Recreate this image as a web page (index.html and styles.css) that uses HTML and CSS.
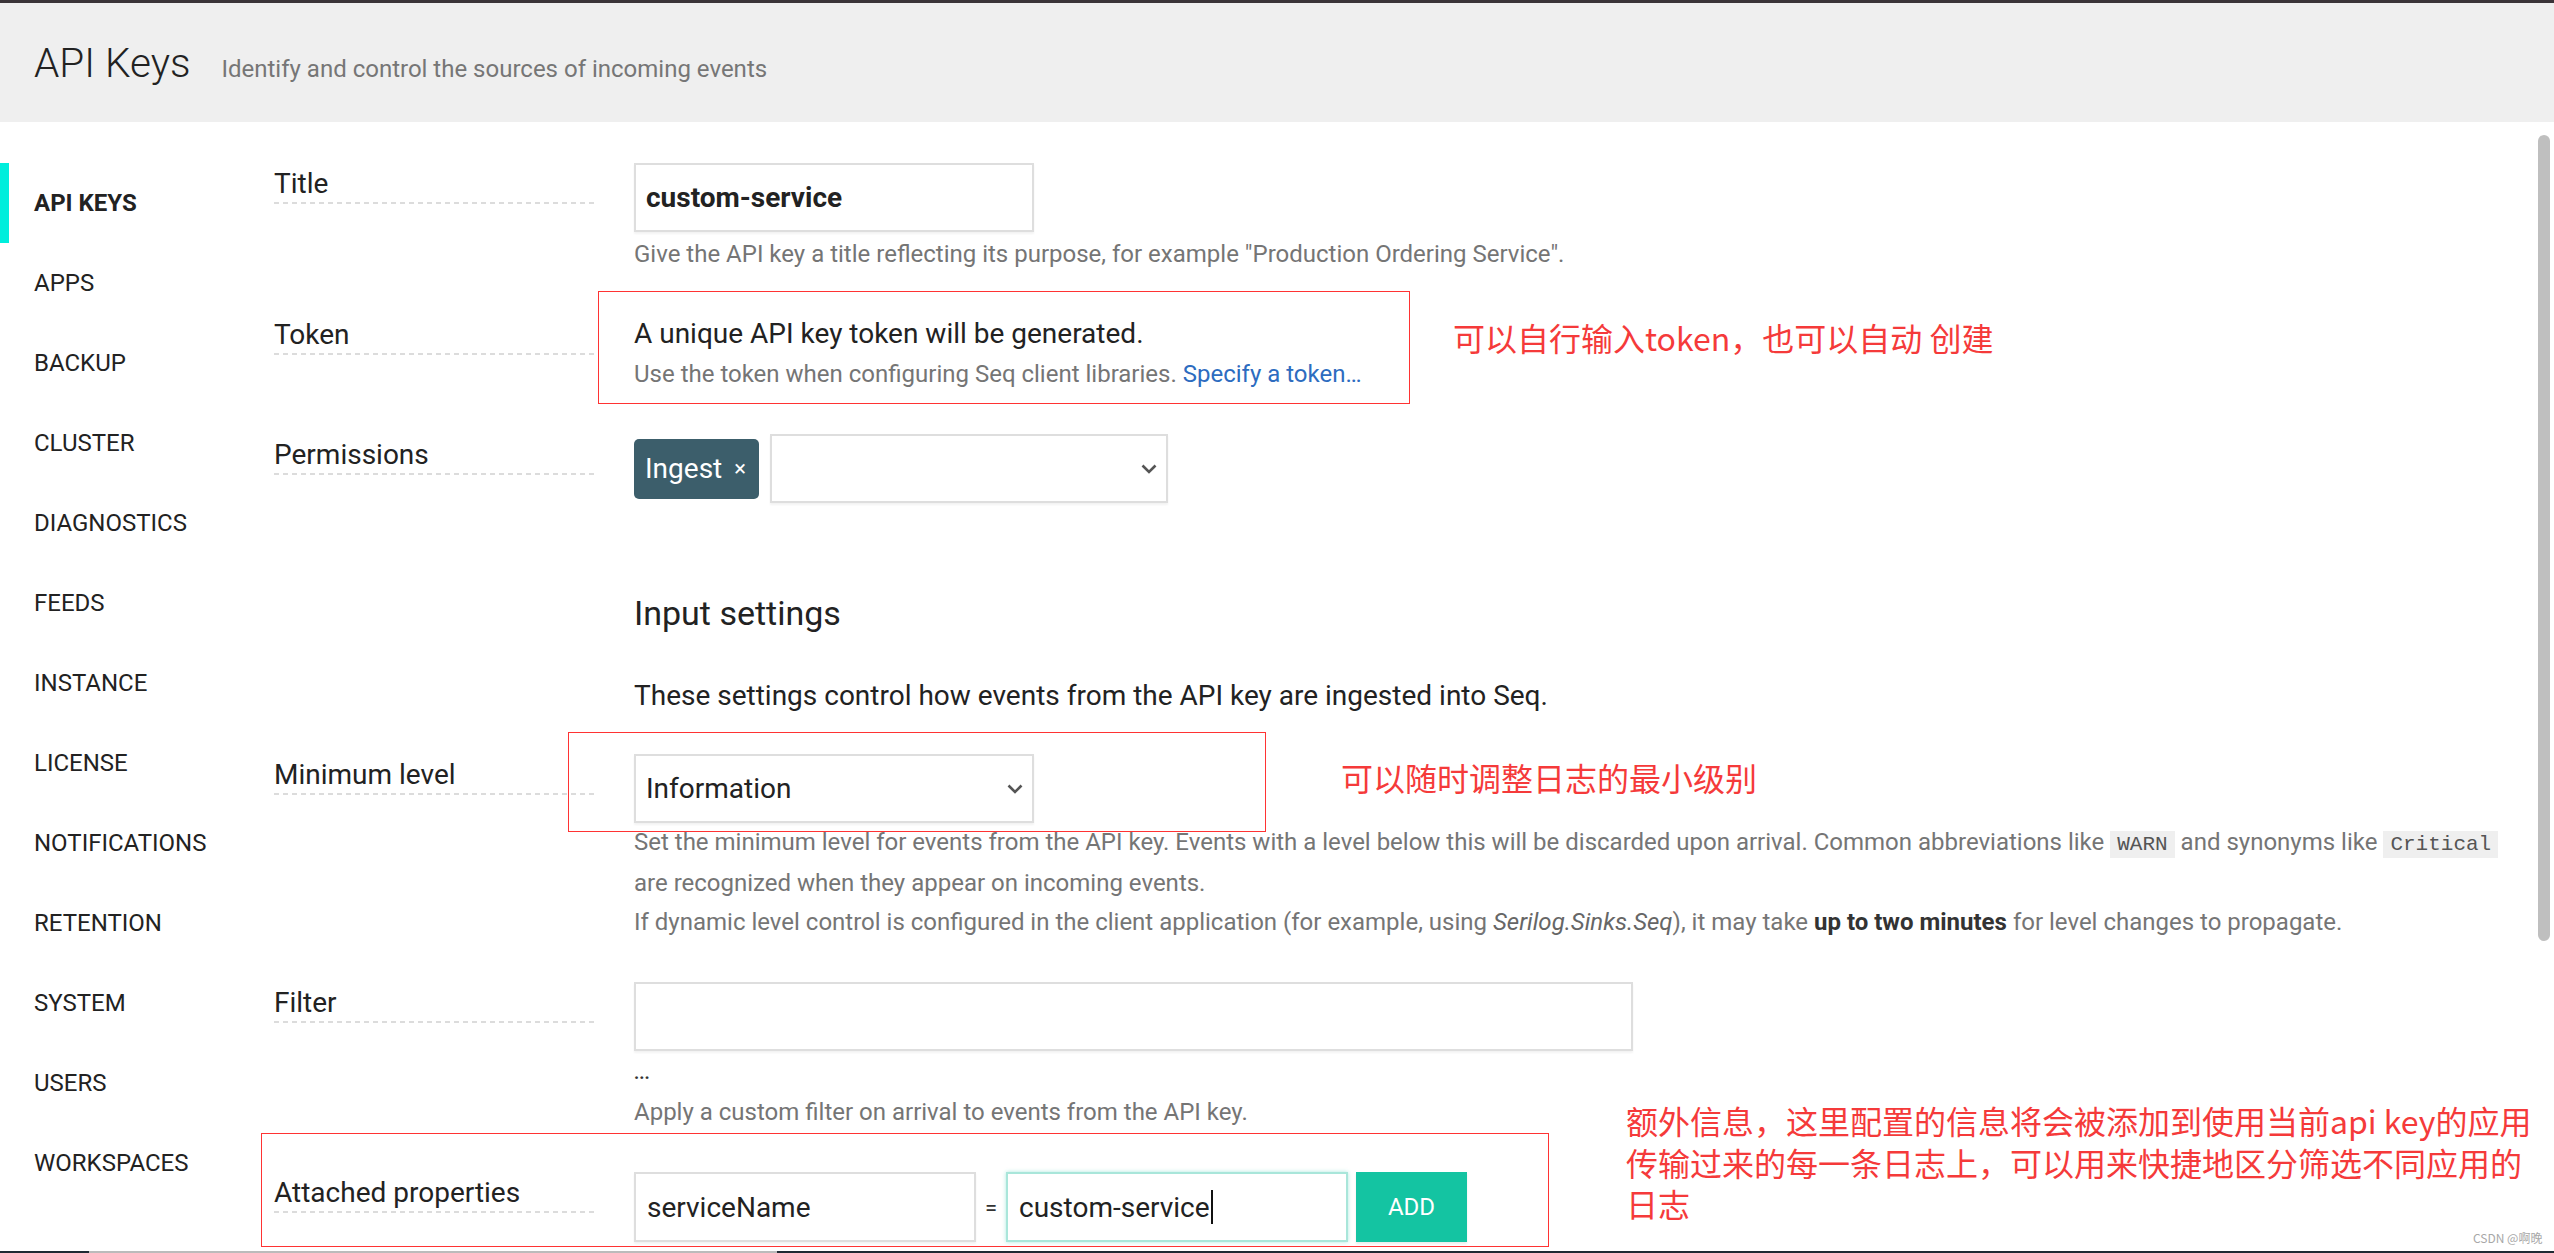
FILE: index.html
```html
<!DOCTYPE html>
<html lang="en">
<head>
<meta charset="utf-8">
<title>API Keys</title>
<link rel="stylesheet" href="styles.css">
</head>
<body>
<div class="topline"></div>
<header class="header">
  <h1>API Keys</h1>
  <span class="sub">Identify and control the sources of incoming events</span>
</header>
<div class="main">
  <nav class="sidebar">
    <div class="nav-item active">API KEYS</div>
    <div class="nav-item">APPS</div>
    <div class="nav-item">BACKUP</div>
    <div class="nav-item">CLUSTER</div>
    <div class="nav-item">DIAGNOSTICS</div>
    <div class="nav-item">FEEDS</div>
    <div class="nav-item">INSTANCE</div>
    <div class="nav-item">LICENSE</div>
    <div class="nav-item">NOTIFICATIONS</div>
    <div class="nav-item">RETENTION</div>
    <div class="nav-item">SYSTEM</div>
    <div class="nav-item">USERS</div>
    <div class="nav-item">WORKSPACES</div>
  </nav>
  <section class="content">
    <div class="row">
      <div class="label">Title</div>
      <div class="field">
        <div class="input title-input">custom-service</div>
        <p class="help help-title">Give the API key a title reflecting its purpose, for example "Production Ordering Service".</p>
      </div>
    </div>
    <div class="row">
      <div class="label">Token</div>
      <div class="field">
        <p class="token-main">A unique API key token will be generated.</p>
        <p class="help">Use the token when configuring Seq client libraries. <a class="link">Specify a token…</a></p>
      </div>
    </div>
    <div class="row">
      <div class="label">Permissions</div>
      <div class="field perm">
        <span class="chip">Ingest<span class="chip-x">×</span></span>
        <div class="select perm-select">
          <span></span>
          <svg class="chev" width="16" height="10" viewBox="0 0 16 10"><polyline points="1.5,1.5 8,8 14.5,1.5" fill="none" stroke="#555" stroke-width="2.6"/></svg>
        </div>
      </div>
    </div>
    <div class="row section">
      <div class="label-empty"></div>
      <div class="field">
        <h2>Input settings</h2>
        <p class="lead">These settings control how events from the API key are ingested into Seq.</p>
      </div>
    </div>
    <div class="row row-level">
      <div class="label">Minimum level</div>
      <div class="field">
        <div class="select level-select">
          <span>Information</span>
          <svg class="chev" width="16" height="10" viewBox="0 0 16 10"><polyline points="1.5,1.5 8,8 14.5,1.5" fill="none" stroke="#555" stroke-width="2.6"/></svg>
        </div>
        <p class="help help-level nowrap">Set the minimum level for events from the API key. Events with a level below this will be discarded upon arrival. Common abbreviations like <code class="code">WARN</code> and synonyms like <code class="code">Critical</code><br>are recognized when they appear on incoming events.</p>
        <p class="help help-level nowrap">If dynamic level control is configured in the client application (for example, using <em>Serilog.Sinks.Seq</em>), it may take <strong>up to two minutes</strong> for level changes to propagate.</p>
      </div>
    </div>
    <div class="row row-filter">
      <div class="label">Filter</div>
      <div class="field">
        <div class="input filter-input"></div>
        <p class="dots">...</p>
        <p class="help help-apply">Apply a custom filter on arrival to events from the API key.</p>
      </div>
    </div>
    <div class="row">
      <div class="label">Attached properties</div>
      <div class="field kv">
        <div class="input kv-input">serviceName</div>
        <span class="eq">=</span>
        <div class="input kv-input focused">custom-service<span class="caret"></span></div>
        <button class="btn-add">ADD</button>
      </div>
    </div>
  </section>
  <div class="scroll"><div class="thumb"></div></div>

  <div class="anno-box anno-box-token"></div>
  <div class="anno-text anno-text-token">可以自行输入token，也可以自动 创建</div>
  <div class="anno-box anno-box-level"></div>
  <div class="anno-text anno-text-level">可以随时调整日志的最小级别</div>
  <div class="anno-box anno-box-props"></div>
  <div class="anno-text anno-text-props">额外信息，这里配置的信息将会被添加到使用当前api key的应用<br>传输过来的每一条日志上，可以用来快捷地区分筛选不同应用的<br>日志</div>
  <div class="watermark">CSDN @啊晚</div>
</div>
<div class="bottombar"><span class="bottom-seg"></span></div>
</body>
</html>
```
FILE: styles.css
```css
* { box-sizing: border-box; margin: 0; padding: 0; }
html, body { width: 2554px; height: 1253px; overflow: hidden; }
body {
  font-family: Roboto, "Noto Sans", "Noto Sans CJK SC", sans-serif;
  color: #222;
  background: #fff;
}

.topline { height: 3px; background: #3a3438; }

.header {
  height: 119px;
  background: #efefef;
  display: flex;
  align-items: baseline;
  padding: 41px 0 0 34px;
}
.header h1 { font-size: 40.5px; font-weight: 300; line-height: 39px; color: #222; }
.header .sub { font-size: 24px; color: #767676; margin-left: 31px; }

.main {
  position: relative;
  display: flex;
  height: 1129px;
}

.sidebar { width: 274px; flex: none; padding-top: 41px; }
.nav-item {
  height: 80px;
  display: flex;
  align-items: center;
  padding-left: 34px;
  font-size: 24px;
  color: #222;
}
.nav-item.active { font-weight: 700; box-shadow: inset 9px 0 0 #00eedc; }

.content { flex: 1; min-width: 0; padding-top: 41px; }

.row {
  display: grid;
  grid-template-columns: 320px 1fr;
  column-gap: 40px;
  margin-top: 40px;
}
.row:first-child { margin-top: 0; }

.label {
  align-self: start;
  height: 41px;
  padding-top: 3px;
  font-size: 28px;
  line-height: 36px;
  color: #222;
  background: repeating-linear-gradient(90deg, #dcdcdc 0 5px, transparent 5px 9px) left bottom / 100% 2px no-repeat;
}

.field { min-width: 0; }

.input {
  height: 69px;
  border: 2px solid #dedede;
  box-shadow: 0 2px 2px rgba(0, 0, 0, 0.05);
  display: flex;
  align-items: center;
  padding: 0 10px;
  font-size: 28px;
  color: #222;
  background: #fff;
}
.title-input { width: 400px; font-weight: 700; }
.filter-input { width: 999px; }

.help { font-size: 24px; line-height: 40px; color: #757575; }
.help-title { margin-top: 2px; }
.help-level { line-height: 39px; }
.nowrap { white-space: nowrap; }
.help em { font-style: italic; color: #666; }
.help strong { font-weight: 700; color: #333; }
.link { color: #2d6cc0; text-decoration: none; }

.token-main { font-size: 28px; line-height: 40px; color: #222; }

.perm { display: flex; align-items: center; gap: 11px; height: 69px; }
.chip {
  width: 125px;
  height: 60px;
  border-radius: 5px;
  background: #3c5e6b;
  color: #fff;
  display: flex;
  align-items: center;
  padding-left: 11px;
  font-size: 28px;
}
.chip-x { margin-left: 12px; font-size: 22px; }

.select {
  height: 69px;
  border: 2px solid #dedede;
  box-shadow: 0 2px 2px rgba(0, 0, 0, 0.05);
  display: flex;
  align-items: center;
  justify-content: space-between;
  padding: 0 9px 0 10px;
  font-size: 28px;
  color: #222;
}
.perm-select { width: 398px; }
.level-select { width: 400px; }
.chev { display: block; }

.row.section { margin-top: 92px; }
.section h2 { font-size: 34px; font-weight: 400; line-height: 36px; color: #222; }
.section .lead { margin-top: 45px; font-size: 28px; line-height: 40px; color: #222; }
.row.row-level { margin-top: 38px; }
.row.row-filter { margin-top: 40px; }

.code {
  font-family: "Liberation Mono", "DejaVu Sans Mono", monospace;
  font-size: 21px;
  background: #efefef;
  color: #555;
  padding: 2px 7px;
}

.dots { margin-top: 4px; font-size: 18px; font-weight: 700; line-height: 36px; color: #333; }
.help-apply { margin-top: 1px; }

.kv { display: flex; align-items: center; }
.kv-input { width: 342px; height: 70px; padding: 0 11px; }
.focused { border-color: #a9e6da; box-shadow: 0 0 4px rgba(20, 196, 162, 0.35); }
.caret { display: inline-block; width: 2px; height: 34px; background: #111; margin-left: 1px; }
.eq { width: 30px; text-align: center; font-size: 22px; color: #333; }
.btn-add {
  margin-left: 8px;
  width: 111px;
  height: 70px;
  border: none;
  background: #14c4a2;
  color: #fff;
  font-family: Roboto, sans-serif;
  font-size: 24px;
  box-shadow: 0 2px 2px rgba(0, 0, 0, 0.08);
}

.scroll { width: 16px; flex: none; }
.thumb { width: 12px; height: 806px; margin-top: 13px; border-radius: 6px; background: #bfbfbf; }

/* annotation overlay */
.anno-box { position: absolute; border: 1px solid #f33; }
.anno-box-token { left: 598px; top: 169px; width: 812px; height: 113px; }
.anno-box-level { left: 568px; top: 610px; width: 698px; height: 100px; }
.anno-box-props { left: 261px; top: 1011px; width: 1288px; height: 114px; }

.anno-text {
  position: absolute;
  font-family: "Noto Sans CJK SC", "Noto Sans", sans-serif;
  font-size: 32px;
  line-height: 40px;
  color: #f53a3a;
  white-space: nowrap;
}
.anno-text-token { left: 1453px; top: 195px; }
.anno-text-level { left: 1341px; top: 635px; }
.anno-text-props { left: 1626px; top: 978px; line-height: 41.5px; }

.watermark {
  position: absolute;
  left: 2473px;
  top: 1108px;
  font-family: "Noto Sans CJK SC", sans-serif;
  font-size: 12px;
  line-height: 16px;
  color: #a8a8a8;
}

.bottombar { height: 2px; background: #1f2a33; display: flex; }
.bottom-seg { margin-left: 89px; width: 688px; background: #bbb; }
```
